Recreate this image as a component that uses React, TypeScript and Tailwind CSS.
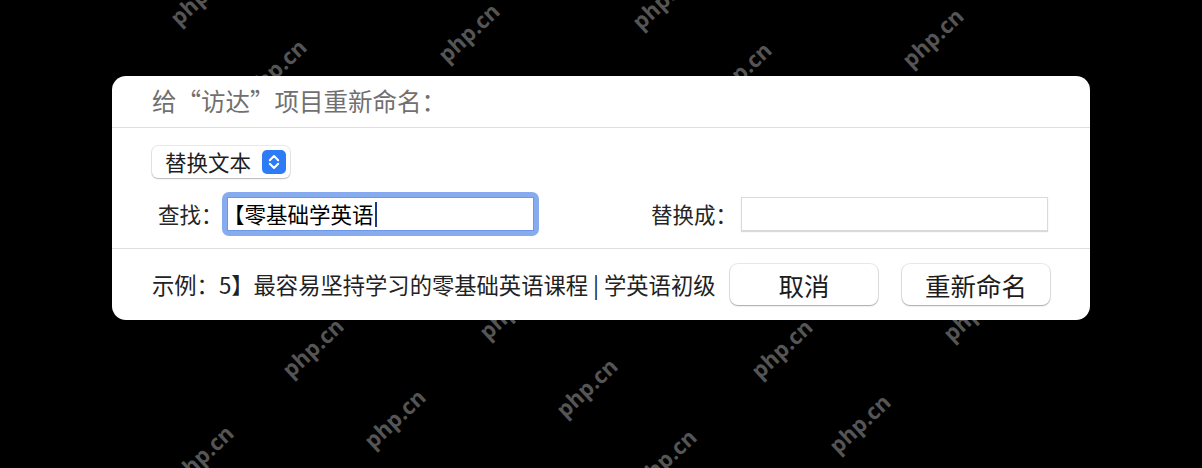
import React from "react";

const CJK = '"Noto Sans CJK SC", "Noto Sans", sans-serif';

// watermark centers taken from the screenshot (some sit behind the dialog)
const marks: [number, number][] = [
  [200, -5],
  [468, 32],
  [275, 68],
  [662, -1],
  [932, 37],
  [740, 71],
  [312, 347],
  [394, 418],
  [202, 454],
  [509, 309],
  [586, 387],
  [781, 348],
  [973, 311],
  [665, 458],
  [859, 423],
];

const StepperIcon = () => (
  <svg width="24" height="24" viewBox="0 0 24 24">
    <rect x="0" y="0" width="24" height="24" rx="5" fill="#2d7cf6" />
    <path d="M7.8 10.2 L12 6 L16.2 10.2" fill="none" stroke="white" strokeWidth="2" strokeLinecap="round" strokeLinejoin="round" />
    <path d="M7.8 13.8 L12 18 L16.2 13.8" fill="none" stroke="white" strokeWidth="2" strokeLinecap="round" strokeLinejoin="round" />
  </svg>
);

const Button = ({ label }: { label: string }) => (
  <div className="w-[148px] h-[41px] rounded-[8px] bg-white flex items-center justify-center text-[25.5px] leading-none text-[#1c1c1c] shadow-[0_0_0_1px_rgba(0,0,0,0.09),0_1px_1.5px_rgba(0,0,0,0.28)]">
    {label}
  </div>
);

export default function App() {
  return (
    <div
      className="relative w-[1202px] h-[468px] bg-black overflow-hidden pt-[76px] pl-[112px]"
      style={{ fontFamily: CJK }}
    >
      {marks.map(([x, y], i) => (
        <span
          key={i}
          className="absolute text-[22px] font-bold leading-none text-[#555555] select-none whitespace-nowrap"
          style={{
            left: x,
            top: y,
            transform: "translate(-50%, -50%) rotate(-43deg)",
            fontFamily: '"Open Sans", "Noto Sans", sans-serif',
          }}
        >
          php.cn
        </span>
      ))}

      <div className="relative z-10 w-[978px] h-[244px] bg-white rounded-[14px] flex flex-col">
        <div className="h-[51px] flex items-center pl-[40px] text-[24.5px] leading-none text-[#707070] whitespace-nowrap">
          给“访达”项目重新命名：
        </div>
        <div className="h-px bg-[#dedede]" />

        <div className="h-[120px] flex flex-col pl-[40px] pt-[18px]">
          <div className="w-[138px] h-[32px] rounded-[6px] bg-white flex items-center pl-[13px] pr-[4px] shadow-[0_0_0_1px_rgba(0,0,0,0.08),0_1px_1.5px_rgba(0,0,0,0.22)]">
            <span className="text-[21.5px] leading-none text-[#1e1e1e] whitespace-nowrap">替换文本</span>
            <span className="ml-auto flex">
              <StepperIcon />
            </span>
          </div>

          <div className="mt-[14px] flex items-center pl-[6px] text-[21.5px] leading-none text-[#262626] whitespace-nowrap">
            <span className="w-[64px] shrink-0">查找：</span>
            <div className="w-[317px] h-[44px] shrink-0 rounded-[7px] bg-[#86abee] p-[5px]">
              <div className="h-full bg-white border border-[#6f98e4] flex items-center pl-[1px] overflow-hidden">
                <span className="-ml-[6px] text-[21.5px] leading-none text-black">【零基础学英语</span>
                <span className="w-[2px] h-[25px] bg-[#1c3a8a] ml-[1px]" />
              </div>
            </div>
            <span className="ml-[112px] w-[90px] shrink-0">替换成：</span>
            <div className="w-[307px] h-[34px] shrink-0 bg-white border border-[#dadada] shadow-[0_1px_1px_rgba(0,0,0,0.15)]" />
          </div>
        </div>

        <div className="h-px bg-[#dedede]" />

        <div className="flex-1 flex items-center pl-[40px] pr-[40px]">
          <span className="text-[22.3px] leading-none text-[#222222] whitespace-nowrap">
            示例：5】最容易坚持学习的零基础英语课程 | 学英语初级
          </span>
          <div className="ml-auto flex gap-[24px]">
            <Button label="取消" />
            <Button label="重新命名" />
          </div>
        </div>
      </div>
    </div>
  );
}
